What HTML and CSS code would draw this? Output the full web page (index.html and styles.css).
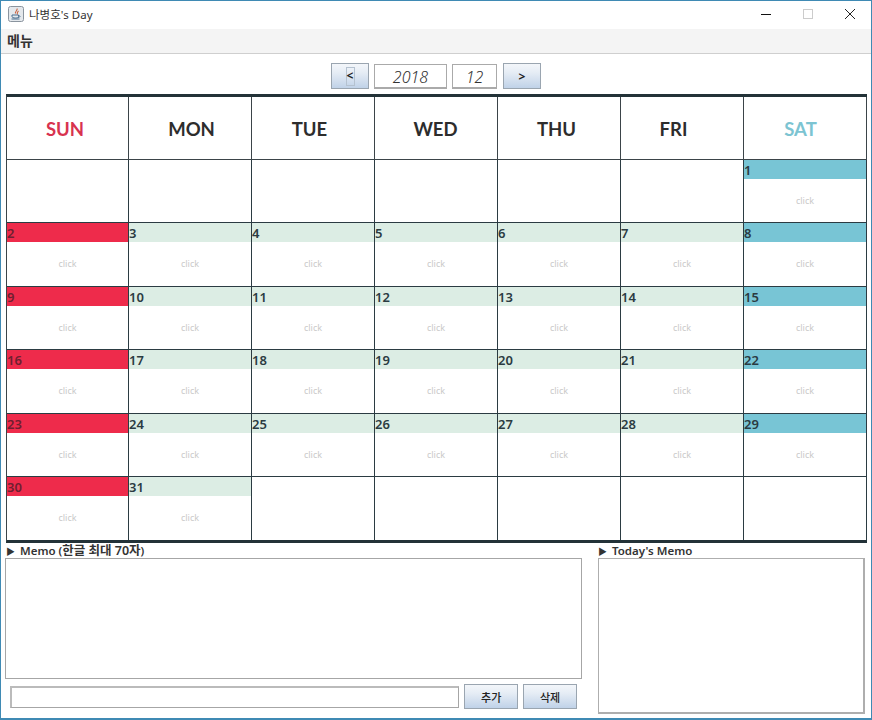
FILE: index.html
```html
<!DOCTYPE html>
<html lang="ko">

<head>
    <meta charset="UTF-8">
    <title>나병호's Day</title>
    <link rel="stylesheet" href="styles.css">
</head>

<body>
    <div class="window">
        <div class="titlebar">
            <svg class="app-icon" width="16" height="16" viewBox="0 0 16 16">
                <rect x="0.5" y="0.5" width="15" height="15" rx="2" fill="#e4e8ec" stroke="#8a949e" />
                <path d="M9 2.500c1 2-2.500 3-1.500 5M10.500 5c-1 1-2 1.500-1 3.500" fill="none" stroke="#c9623f" stroke-width="1.100" />
                <path d="M4 9h6.500v1.500c0 1-1 1.500-3 1.500s-3.500-.5-3.500-1.500zM10.500 9.500c2 0 2 2-.5 2" fill="none" stroke="#4a6f90" stroke-width="1" />
                <path d="M3.500 13h8" stroke="#4a6f90" stroke-width="1" />
            </svg>
            <span class="title">나병호's Day</span>
            <div class="win-btns">
                <svg width="12" height="12" viewBox="0 0 12 12"><path d="M1 6.500h10" stroke="#111" /></svg>
                <svg class="win-max" width="12" height="12" viewBox="0 0 12 12"><rect x="1.500" y="1.500" width="9" height="9" fill="none" stroke="#ccc" /></svg>
                <svg width="12" height="12" viewBox="0 0 12 12"><path d="M1 1l10 10M11 1L1 11" stroke="#222" /></svg>
            </div>
        </div>
        <div class="menubar">메뉴</div>
        <div class="toolbar">
            <button class="btn nav-btn"><span class="focus-box">&lt;</span></button>
            <div class="field year">2018</div>
            <div class="field month">12</div>
            <button class="btn nav-btn">&gt;</button>
        </div>

        <div class="calendar">
            <div class="head sun">SUN</div>
            <div class="head mon">MON</div>
            <div class="head tue">TUE</div>
            <div class="head wed">WED</div>
            <div class="head thu">THU</div>
            <div class="head fri">FRI</div>
            <div class="head sat">SAT</div>

            <div class="cell"></div>
            <div class="cell"></div>
            <div class="cell"></div>
            <div class="cell"></div>
            <div class="cell"></div>
            <div class="cell"></div>
            <div class="cell day-sat"><div class="num">1</div><div class="click">click</div></div>

            <div class="cell day-sun"><div class="num">2</div><div class="click">click</div></div>
            <div class="cell"><div class="num">3</div><div class="click">click</div></div>
            <div class="cell"><div class="num">4</div><div class="click">click</div></div>
            <div class="cell"><div class="num">5</div><div class="click">click</div></div>
            <div class="cell"><div class="num">6</div><div class="click">click</div></div>
            <div class="cell"><div class="num">7</div><div class="click">click</div></div>
            <div class="cell day-sat"><div class="num">8</div><div class="click">click</div></div>

            <div class="cell day-sun"><div class="num">9</div><div class="click">click</div></div>
            <div class="cell"><div class="num">10</div><div class="click">click</div></div>
            <div class="cell"><div class="num">11</div><div class="click">click</div></div>
            <div class="cell"><div class="num">12</div><div class="click">click</div></div>
            <div class="cell"><div class="num">13</div><div class="click">click</div></div>
            <div class="cell"><div class="num">14</div><div class="click">click</div></div>
            <div class="cell day-sat"><div class="num">15</div><div class="click">click</div></div>

            <div class="cell day-sun"><div class="num">16</div><div class="click">click</div></div>
            <div class="cell"><div class="num">17</div><div class="click">click</div></div>
            <div class="cell"><div class="num">18</div><div class="click">click</div></div>
            <div class="cell"><div class="num">19</div><div class="click">click</div></div>
            <div class="cell"><div class="num">20</div><div class="click">click</div></div>
            <div class="cell"><div class="num">21</div><div class="click">click</div></div>
            <div class="cell day-sat"><div class="num">22</div><div class="click">click</div></div>

            <div class="cell day-sun"><div class="num">23</div><div class="click">click</div></div>
            <div class="cell"><div class="num">24</div><div class="click">click</div></div>
            <div class="cell"><div class="num">25</div><div class="click">click</div></div>
            <div class="cell"><div class="num">26</div><div class="click">click</div></div>
            <div class="cell"><div class="num">27</div><div class="click">click</div></div>
            <div class="cell"><div class="num">28</div><div class="click">click</div></div>
            <div class="cell day-sat"><div class="num">29</div><div class="click">click</div></div>

            <div class="cell day-sun"><div class="num">30</div><div class="click">click</div></div>
            <div class="cell"><div class="num">31</div><div class="click">click</div></div>
            <div class="cell"></div>
            <div class="cell"></div>
            <div class="cell"></div>
            <div class="cell"></div>
            <div class="cell"></div>
        </div>

        <div class="bottom">
            <div class="memo-left">
                <div class="label"><span class="arrow">▶</span> Memo (<span class="ko">한글 최대 70자</span>)</div>
                <div class="memo-box memo-area"></div>
                <div class="memo-input-row">
                    <div class="memo-box memo-input"></div>
                    <button class="btn memo-btn">추가</button>
                    <button class="btn memo-btn">삭제</button>
                </div>
            </div>
            <div class="memo-right">
                <div class="label today-label"><span class="arrow">▶</span> Today's Memo</div>
                <div class="memo-box today-area"></div>
            </div>
        </div>
    </div>
</body>

</html>
```

FILE: styles.css
```css
* {
    box-sizing: border-box;
}

body {
    margin: 0;
    background-color: #fff;
    font-family: 'Noto Sans', 'Noto Sans CJK KR', sans-serif;
    color: #333;
}

.window {
    width: 872px;
    height: 720px;
    border: 1px solid #3f8ab4;
    border-bottom-width: 2px;
    background-color: #fff;
    overflow: hidden;
}

/* title and menu */
.titlebar {
    display: flex;
    align-items: center;
    height: 28px;
    padding-left: 7px;
    padding-bottom: 2px;
}

.app-icon {
    margin-right: 5px;
}

.title {
    font-size: 11.500px;
    color: #333;
}

.win-btns {
    display: flex;
    align-items: center;
    margin-left: auto;
    margin-right: 15px;
    gap: 30px;
}

.menubar {
    height: 25px;
    padding-left: 6px;
    background-color: #f4f4f4;
    border-bottom: 1px solid #cfcfcf;
    font-size: 14px;
    font-weight: 700;
    line-height: 24px;
}

.toolbar {
    display: flex;
    justify-content: center;
    align-items: center;
    height: 40px;
    padding-top: 4px;
    gap: 5px;
}

.btn {
    padding: 0;
    border: 1px solid #9aa5b0;
    background: linear-gradient(#f3f6fa, #e6edf5 35%, #c0d2e8);
    font-family: inherit;
    font-size: 12px;
    font-weight: 700;
    color: #222;
}

.nav-btn {
    width: 38px;
    height: 26px;
}

.focus-box {
    display: inline-block;
    width: 9px;
    height: 19px;
    border: 1px solid #b5c2d0;
    line-height: 15px;
}

.field {
    height: 25px;
    border: 1px solid #aaa;
    border-bottom-width: 2px;
    text-align: center;
    font-size: 16px;
    font-style: italic;
    font-weight: 300;
    line-height: 24px;
    color: #333;
}

.year {
    width: 73px;
}

.month {
    width: 45px;
    margin-right: 1px;
}

/* calendar */
.calendar {
    display: grid;
    grid-template-columns: 122px repeat(6, 123px);
    grid-template-rows: 63px repeat(6, 63.400px);
    width: 861px;
    margin-left: 5px;
    border-top: 3px solid #233238;
    border-bottom: 3px solid #233238;
    border-left: 1px solid #3b4449;
}

.head {
    display: flex;
    justify-content: center;
    align-items: center;
    padding-top: 2px;
    border-right: 1px solid #3b4449;
    border-bottom: 1px solid #3b4449;
    font-family: 'Lato', 'Noto Sans', sans-serif;
    font-size: 18.500px;
    font-weight: 700;
    color: #2d2d2d;
}

.head.sun {
    color: #d8334f;
    padding-right: 5px;
}

.head.mon {
    padding-left: 3px;
}

.head.tue {
    padding-right: 7px;
}

.head.wed {
    padding-right: 1px;
}

.head.thu {
    padding-right: 5px;
}

.head.fri {
    padding-right: 17px;
}

.head.sat {
    color: #7cc4d2;
    padding-right: 9px;
}

.cell {
    border-right: 1px solid #2b3b42;
    border-bottom: 1px solid #2b3b42;
}

.calendar .cell:nth-last-child(-n+7) {
    border-bottom: 0;
}

.num {
    height: 19px;
    background-color: #dcede4;
    font-size: 13px;
    font-weight: 600;
    line-height: 21px;
    color: #2b3b42;
}

.day-sun .num {
    background-color: #ee2b4b;
    color: #6e1f30;
}

.day-sat .num {
    background-color: #78c5d5;
}

.click {
    padding-top: 14px;
    text-align: center;
    font-size: 9px;
    line-height: 16px;
    color: #c9c9c9;
}

/* memo */
.bottom {
    display: flex;
    margin-left: 4px;
}

.memo-left {
    width: 577px;
    margin-right: 16px;
}

.memo-right {
    width: 267px;
}

.label {
    height: 15px;
    padding-left: 1px;
    font-size: 11.500px;
    font-weight: 600;
    line-height: 16px;
    color: #333;
}

.today-label {
    padding-left: 0;
}

.ko {
    font-size: 12.500px;
}

.arrow {
    font-size: 9px;
    margin-right: 2px;
}

.memo-box {
    border: 1px solid #a6a6a6;
    background-color: #fff;
}

.memo-area {
    height: 121px;
}

.today-area {
    height: 156px;
    border-width: 1px 2px 2px 1px;
    border-color: #aeaeae;
}

.memo-input-row {
    display: flex;
    align-items: center;
    margin-top: 5px;
    padding-left: 5px;
}

.memo-input {
    width: 450px;
    height: 22px;
    margin-right: 5px;
    border-top: 2px solid #bbb;
    border-left: 2px solid #bbb;
}

.memo-btn {
    width: 54px;
    height: 25px;
    margin-right: 5px;
    font-size: 11px;
    font-weight: 500;
}
```
